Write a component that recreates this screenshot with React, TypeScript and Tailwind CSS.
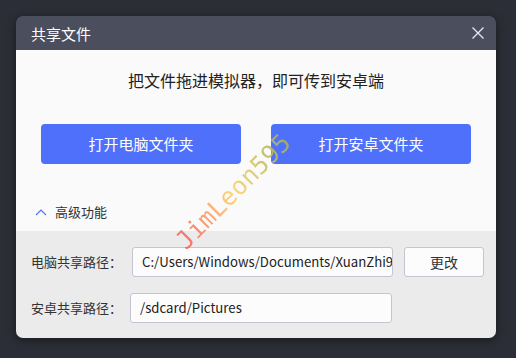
import React from "react";

const font = { fontFamily: '"Noto Sans CJK SC", "Noto Sans", sans-serif' };

export default function App() {
  return (
    <div
      className="w-[516px] h-[358px] bg-[#2b2e36] pt-[16px] pl-[16px] overflow-hidden"
      style={font}
    >
      <div className="relative w-[480px] rounded-[7px] overflow-hidden shadow-[0_2px_10px_rgba(0,0,0,0.45)]">
        {/* Header */}
        <div className="h-[34px] bg-[#4b4e5c] flex items-center justify-between pl-[15px] pr-[10px]">
          <span className="text-[15px] leading-none text-white">共享文件</span>
          <svg width="16" height="16" viewBox="0 0 16 16" className="text-[#e8e9ee]">
            <path d="M2.5 2.5 L13.5 13.5 M13.5 2.5 L2.5 13.5" stroke="currentColor" strokeWidth="1.3" fill="none" />
          </svg>
        </div>
        {/* Body */}
        <div className="bg-[#fafafa] h-[181px] flex flex-col items-center pt-[18px]">
          <div className="text-[16px] leading-[24px] text-[#222]">
            把文件拖进模拟器，即可传到安卓端
          </div>
          <div className="flex gap-[30px] mt-[32px]">
            <button className="w-[200px] h-[40px] rounded-[4px] bg-[#4f70fb] text-white text-[15px]">
              打开电脑文件夹
            </button>
            <button className="w-[200px] h-[40px] rounded-[4px] bg-[#4f70fb] text-white text-[15px]">
              打开安卓文件夹
            </button>
          </div>
          <div className="self-start flex items-center ml-[19px] mt-[38px] h-[20px]">
            <svg width="12" height="8" viewBox="0 0 12 8" className="text-[#4f70fb]">
              <path d="M1 7 L6 2 L11 7" stroke="currentColor" strokeWidth="1.1" fill="none" />
            </svg>
            <span className="ml-[8px] text-[13px] text-[#333]">高级功能</span>
          </div>
        </div>
        {/* Advanced section */}
        <div className="bg-[#ebebeb] h-[107px] pl-[15px] pt-[16px] flex flex-col gap-[16px]">
          <div className="flex items-center h-[30px]">
            <span className="w-[101px] text-[13px] text-[#333] whitespace-nowrap">电脑共享路径：</span>
            <div className="w-[261px] h-[30px] rounded-[3px] border border-[#c3c5d0] bg-[#fcfcfd] flex items-center pl-[9px] overflow-hidden">
              <span className="text-[13.2px] text-[#222] whitespace-nowrap">
                C:/Users/Windows/Documents/XuanZhi9/Pictures
              </span>
            </div>
            <button className="ml-[11px] w-[80px] h-[30px] rounded-[3px] border border-[#c3c5d0] bg-[#fcfcfd] text-[14px] text-[#333]">
              更改
            </button>
          </div>
          <div className="flex items-center h-[30px]">
            <span className="w-[99px] text-[13px] text-[#333] whitespace-nowrap">安卓共享路径：</span>
            <div className="w-[262px] h-[30px] rounded-[3px] border border-[#c3c5d0] bg-[#fcfcfd] flex items-center pl-[9px] overflow-hidden">
              <span className="text-[13.2px] text-[#222] whitespace-nowrap">/sdcard/Pictures</span>
            </div>
          </div>
        </div>
        {/* Watermark */}
        <div
          className="absolute left-[142px] top-[163px] -rotate-45 origin-center text-[25px] leading-none whitespace-nowrap bg-clip-text text-transparent bg-gradient-to-r from-[#f25c5c] via-[#ffd268] to-[#a3b25a] opacity-90 pointer-events-none"
          style={{ fontFamily: '"DejaVu Sans Mono", monospace' }}
        >
          JimLeon595
        </div>
      </div>
    </div>
  );
}
